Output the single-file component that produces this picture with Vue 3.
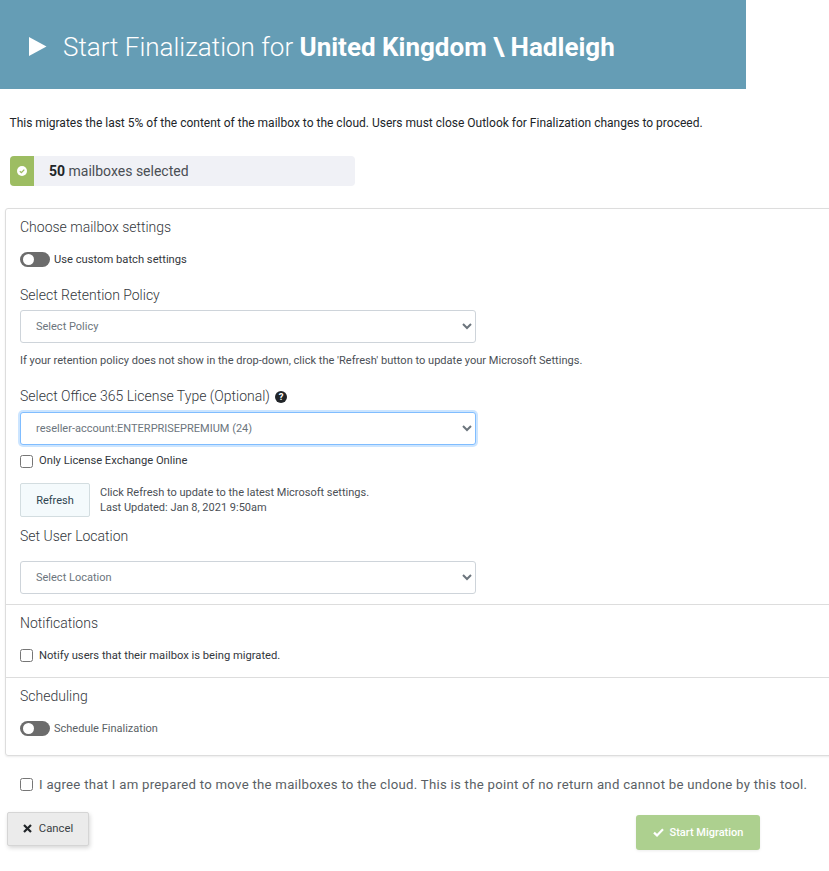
<script setup>
const policyOptions = ['Select Policy']
const licenseOptions = ['reseller-account:ENTERPRISEPREMIUM (24)']
const locationOptions = ['Select Location']
</script>

<template>
  <div class="page">
    <header class="hero">
      <svg class="play" width="18" height="19" viewBox="0 0 18 19"><path d="M0 0 L17.5 9.5 L0 19 Z" fill="#fff" /></svg>
      <h1>Start Finalization for <b>United Kingdom \ Hadleigh</b></h1>
    </header>

    <p class="intro">This migrates the last 5% of the content of the mailbox to the cloud. Users must close Outlook for Finalization changes to proceed.</p>

    <div class="selected">
      <span class="selected-icon">
        <svg width="10" height="10" viewBox="0 0 10 10"><circle cx="5" cy="5" r="5" fill="#fff" /><path d="M2.8 5.2 L4.4 6.7 L7.3 3.6" fill="none" stroke="#9dbd62" stroke-width="1.3" /></svg>
      </span>
      <span class="selected-text"><b>50</b> mailboxes selected</span>
    </div>

    <section class="panel">
      <div class="block block-main">
        <h2>Choose mailbox settings</h2>
        <label class="toggle-row"><span class="toggle"><i></i></span>Use custom batch settings</label>

        <h2 class="retention">Select Retention Policy</h2>
        <select class="field"><option v-for="o in policyOptions" :key="o">{{ o }}</option></select>
        <p class="hint">If your retention policy does not show in the drop-down, click the 'Refresh' button to update your Microsoft Settings.</p>

        <h2 class="license">Select Office 365 License Type (Optional)
          <svg class="help" width="12" height="12" viewBox="0 0 12 12"><circle cx="6" cy="6" r="6" fill="#212529" /><text x="6" y="9.3" text-anchor="middle" font-size="9.5" font-weight="700" font-family="Roboto, sans-serif" fill="#fff">?</text></svg>
        </h2>
        <select class="field focused"><option v-for="o in licenseOptions" :key="o">{{ o }}</option></select>
        <label class="check-row exchange"><input type="checkbox" />Only License Exchange Online</label>

        <div class="refresh-row">
          <button class="refresh" type="button">Refresh</button>
          <div class="refresh-note">Click Refresh to update to the latest Microsoft settings.<br />Last Updated: Jan 8, 2021 9:50am</div>
        </div>

        <h2 class="location">Set User Location</h2>
        <select class="field"><option v-for="o in locationOptions" :key="o">{{ o }}</option></select>
      </div>

      <div class="block block-notify">
        <h2>Notifications</h2>
        <label class="check-row notify"><input type="checkbox" />Notify users that their mailbox is being migrated.</label>
      </div>

      <div class="block block-schedule">
        <h2>Scheduling</h2>
        <label class="toggle-row muted"><span class="toggle"><i></i></span>Schedule Finalization</label>
      </div>
    </section>

    <label class="agree"><input type="checkbox" />I agree that I am prepared to move the mailboxes to the cloud. This is the point of no return and cannot be undone by this tool.</label>

    <div class="actions">
      <button class="cancel" type="button">
        <svg width="9" height="9" viewBox="0 0 9 9"><path d="M1 1 L8 8 M8 1 L1 8" stroke="#212529" stroke-width="2.2" /></svg>
        Cancel
      </button>
      <button class="start" type="button">
        <svg width="11" height="9" viewBox="0 0 11 9"><path d="M1 4.6 L4 7.4 L10 1.2" fill="none" stroke="#fff" stroke-width="2.2" /></svg>
        Start Migration
      </button>
    </div>
  </div>
</template>

<style>
html, body { margin: 0; background: #fff; overflow: hidden; }
</style>

<style scoped>
.page {
  width: 829px;
  height: 871px;
  overflow: hidden;
  font-family: Roboto, "Liberation Sans", sans-serif;
  color: #212529;
  box-sizing: border-box;
}
.hero {
  width: 746px;
  height: 89px;
  background: #659db5;
  display: flex;
  align-items: center;
  padding: 4px 0 0 29px;
  box-sizing: border-box;
  color: #fff;
}
.play { margin-right: 16px; flex: none; margin-top: -1px; }
.hero h1 {
  margin: 0;
  font-size: 26px;
  font-weight: 300;
  white-space: nowrap;
}
.hero b { font-weight: 700; }
.intro {
  margin: 27px 0 0 9.5px;
  font-size: 12px;
  line-height: 14px;
  white-space: nowrap;
}
.selected {
  margin: 26px 0 0 10px;
  width: 345px;
  height: 30px;
  background: #f0f1f6;
  border-radius: 4px;
  display: flex;
  align-items: center;
  overflow: hidden;
}
.selected-icon {
  width: 24px;
  height: 30px;
  background: #9dbd62;
  display: flex;
  align-items: center;
  justify-content: center;
}
.selected-text {
  margin-left: 15px;
  font-size: 14px;
  color: #4a4e54;
}
.selected-text b { color: #212529; font-weight: 700; }
.panel {
  margin: 22px 0 0 5px;
  width: 840px;
  height: 548px;
  border: 1px solid #ddd;
  border-radius: 3px;
  box-shadow: 0 1px 2px rgba(0, 0, 0, .08);
  box-sizing: border-box;
}
.block { padding: 10px 14px 0; box-sizing: border-box; }
.block-main { height: 396px; border-bottom: 1px solid #ddd; }
.block-notify { height: 73px; border-bottom: 1px solid #ddd; }
h2 {
  margin: 0;
  font-size: 14px;
  line-height: 17px;
  font-weight: 300;
  color: #33373c;
}
.toggle-row {
  display: flex;
  align-items: center;
  margin-top: 16px;
  font-size: 11.2px;
  line-height: 15px;
  color: #33373c;
}
.toggle-row.muted { color: #5a5f65; font-size: 11px; }
.toggle {
  width: 30px;
  height: 15px;
  border-radius: 8px;
  background: #6c6c6c;
  position: relative;
  margin-right: 4px;
  flex: none;
}
.toggle i {
  position: absolute;
  left: 3px;
  top: 2px;
  width: 11px;
  height: 11px;
  border-radius: 50%;
  background: #fff;
}
.retention { margin-top: 20px; }
.field {
  display: block;
  width: 456px;
  height: 33px;
  margin-top: 6px;
  padding: 0 11px;
  border: 1px solid #ced4da;
  border-radius: 3px;
  background: #fff;
  font-family: inherit;
  font-size: 11px;
  color: #6c757d;
  outline: none;
  box-sizing: border-box;
}
.field.focused {
  border-color: #80bdff;
  box-shadow: 0 0 0 2px rgba(0, 123, 255, .2);
}
.hint {
  margin: 11px 0 0;
  font-size: 11.05px;
  line-height: 14px;
  color: #4b5056;
  white-space: nowrap;
}
.license { margin-top: 20px; }
.license + .field { margin-top: 7px; }
.help { vertical-align: -2px; margin-left: 2px; }
.check-row {
  display: flex;
  align-items: center;
  font-size: 11.2px;
  line-height: 14px;
  color: #33373c;
}
.check-row input, .agree input {
  width: 13px;
  height: 13px;
  margin: 0 6px 0 0;
  flex: none;
}
.exchange { margin-top: 9px; }
.refresh-row {
  display: flex;
  align-items: center;
  margin-top: 15px;
}
.refresh {
  width: 70px;
  height: 34px;
  border: 1px solid #d3dde0;
  border-radius: 2px;
  background: #f4fafc;
  font-family: inherit;
  font-size: 11px;
  color: #2f4550;
  padding: 0;
  flex: none;
}
.refresh-note {
  margin-left: 10px;
  font-size: 11px;
  line-height: 15px;
  color: #4b5056;
}
.location { margin-top: 11px; }
.location + .field { margin-top: 16px; }
.notify { margin-top: 17px; }
.notify input { margin-top: -2px; }
.agree {
  display: flex;
  align-items: center;
  margin: 20px 0 0 20px;
  font-size: 13.2px;
  line-height: 17px;
  color: #5a5f65;
  letter-spacing: .265px;
  white-space: nowrap;
}
.actions {
  display: flex;
  margin: 19px 0 0 7px;
}
.cancel {
  width: 82px;
  height: 34px;
  border: 1px solid #d5d5d5;
  border-radius: 2px;
  background: #ebebeb;
  box-shadow: 1px 2px 4px rgba(0, 0, 0, .16);
  font-family: inherit;
  font-size: 11.3px;
  color: #3a3f44;
  display: flex;
  align-items: center;
  justify-content: center;
  gap: 7px;
  padding: 0 0 2px;
}
.start {
  width: 124px;
  height: 35px;
  margin: 3px 0 0 547px;
  border: none;
  border-radius: 3px;
  background: #add08f;
  box-shadow: 0 1px 3px rgba(0, 0, 0, .08);
  font-family: inherit;
  font-size: 11px;
  font-weight: 500;
  color: #fff;
  display: flex;
  align-items: center;
  justify-content: center;
  gap: 6px;
  padding: 0 0 1px;
}
</style>
